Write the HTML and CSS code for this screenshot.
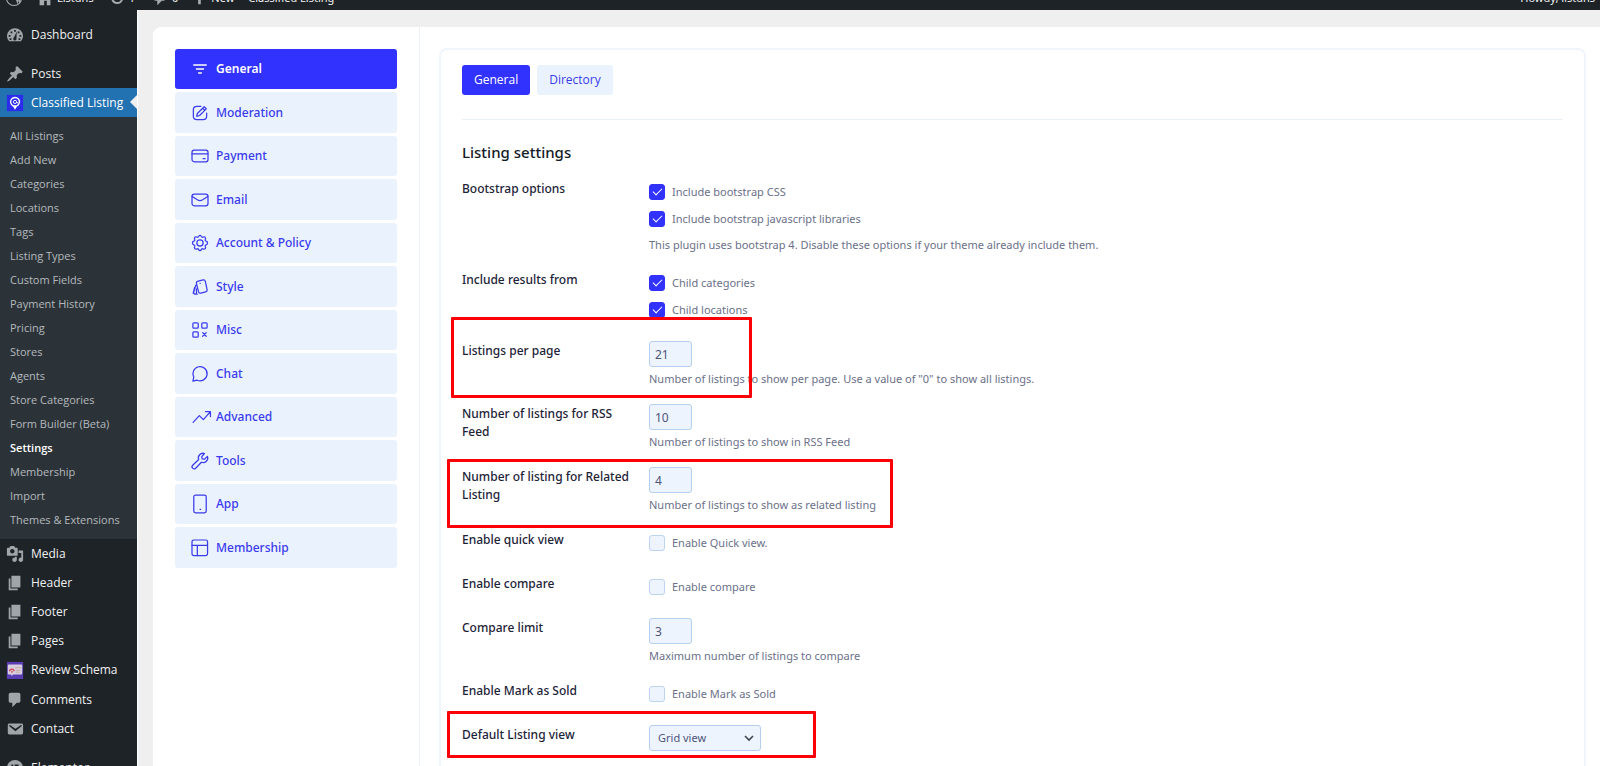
FILE: index.html
```html
<!DOCTYPE html>
<html lang="en">
<head>
<meta charset="utf-8">
<title>Classified Listing Settings</title>
<link rel="stylesheet" href="styles.css">
</head>
<body>
<svg class="defs" aria-hidden="true">
  <symbol id="pages" viewBox="0 0 20 20"><path d="M6 15V2h10v13H6zm-1 1h8v2H3V5h2v11z"/></symbol>
</svg>
<div class="page">
  <header class="bar">
    <div class="bar-inner">
      <svg class="bar-icon" viewBox="0 0 20 20"><path fill-rule="evenodd" d="M10 1a9 9 0 1 0 0 18 9 9 0 0 0 0-18zm0 1.200a7.800 7.800 0 1 1 0 15.600 7.800 7.800 0 0 1 0-15.600z"/><path d="M3 7l4 10.500L9.200 11 7.500 6.500H13l3 9.500c1.500-2 1.800-6 .8-8.800L14 17l-3.500-9.500L7 17.500z"/></svg>
      <a href="#" class="bar-site"><svg class="bar-icon" viewBox="0 0 20 20"><path d="M16 8.500l1.500 1.500-1 1L10 4.500 3.500 11l-1-1L10 2.500zM10 6l6 6v6h-4v-5H9v5H4v-6z"/></svg>Listdns</a>
      <a href="#" class="bar-updates"><svg class="bar-icon" viewBox="0 0 20 20"><path d="M10.200 3.300c3.800 0 6.800 3 6.800 6.700s-3 6.700-6.800 6.700a6.700 6.700 0 0 1-6.400-4.700h2.300a4.600 4.600 0 1 0-.4-3H8l-3.500 3.800L1 9h2.500a6.800 6.800 0 0 1 6.700-5.700z"/></svg>1</a>
      <a href="#" class="bar-comments"><svg class="bar-icon" viewBox="0 0 20 20"><path d="M5 2h9c1.100 0 2 .9 2 2v7c0 1.100-.9 2-2 2h-2l-5 5v-5H5c-1.100 0-2-.9-2-2V4c0-1.100.9-2 2-2z"/></svg>0</a>
      <a href="#" class="bar-new"><svg class="bar-icon" viewBox="0 0 20 20"><path d="M9 5h3v4h4v3h-4v5H9v-5H5V9h4z"/></svg>New</a>
      <a href="#">Classified Listing</a>
      <a href="#" class="bar-user">Howdy, listdns</a>
    </div>
  </header>
  <div class="body">
    <nav class="side" aria-label="Admin menu">
      <a href="#" class="item"><svg viewBox="0 0 20 20"><path fill-rule="evenodd" d="M3.500 17A9 9 0 0 1 1 11.500a9 9 0 0 1 18 0A9 9 0 0 1 16.500 17zM9 4.500v2h2v-2zM5 6v2h2V6zm8 0v2h2V6zM3 10v2h2v-2zm12 0v2h2v-2zm-3-4L9 12.500a1.900 1.900 0 1 0 2.600.9zM4 13.500v2h2v-2zm10 0v2h2v-2z"/></svg>Dashboard</a>
      <a href="#" class="item spaced"><svg viewBox="0 0 20 20"><path d="M10.440 3.020l1.820-1.820 6.360 6.350-1.830 1.820c-1.050-.68-2.480-.57-3.410.36l-.75.75c-.92.93-1.040 2.350-.35 3.410l-1.830 1.820-2.410-2.410-2.800 2.790c-.42.42-3.380 2.710-3.800 2.290s1.860-3.390 2.280-3.810l2.790-2.790L4.100 9.360l1.830-1.820c1.050.69 2.480.57 3.400-.36l.75-.75c.93-.92 1.050-2.350.36-3.410z"/></svg>Posts</a>
      <a href="#" class="item current"><svg viewBox="0 0 20 20"><rect x="1" y="1" width="18" height="18" fill="#2c2cec"/><path fill="none" stroke="#fff" stroke-width="1.500" d="M8 13.200a4.900 4.900 0 1 1 4.300-.1"/><path fill="none" stroke="#fff" d="M11.800 8.800a1.800 1.800 0 1 1-3.600 0 1.800 1.800 0 0 1 3.600 0c0 1.800 1.600 1.400 1.600.2"/><path fill="#fff" d="M7 12.500h6L10 17.500z"/></svg>Classified Listing</a>
      <div class="sub">
        <a href="#">All Listings</a><a href="#">Add New</a><a href="#">Categories</a><a href="#">Locations</a><a href="#">Tags</a><a href="#">Listing Types</a><a href="#">Custom Fields</a><a href="#">Payment History</a><a href="#">Pricing</a><a href="#">Stores</a><a href="#">Agents</a><a href="#">Store Categories</a><a href="#">Form Builder (Beta)</a><a href="#" class="on">Settings</a><a href="#">Membership</a><a href="#">Import</a><a href="#">Themes &amp; Extensions</a>
      </div>
      <a href="#" class="item"><svg viewBox="0 0 20 20"><path d="M13 11V4c0-.55-.45-1-1-1h-1.670L9 1H5L3.670 3H2c-.55 0-1 .45-1 1v7c0 .55.45 1 1 1h10c.55 0 1-.45 1-1zM7 4.500c1.380 0 2.500 1.120 2.500 2.500S8.380 9.500 7 9.500 4.500 8.380 4.500 7 5.620 4.500 7 4.500zM14 6h5v10.500c0 1.380-1.120 2.500-2.500 2.500S14 17.880 14 16.500s1.120-2.500 2.500-2.500c.17 0 .34.02.5.05V9h-3V6zm-4 8.050V13h2v3.500c0 1.380-1.120 2.500-2.500 2.500S7 17.880 7 16.500 8.120 14 9.500 14c.17 0 .34.02.5.05z"/></svg>Media</a>
      <a href="#" class="item"><svg><use href="#pages"/></svg>Header</a>
      <a href="#" class="item"><svg><use href="#pages"/></svg>Footer</a>
      <a href="#" class="item"><svg><use href="#pages"/></svg>Pages</a>
      <a href="#" class="item tall-item"><svg viewBox="0 0 20 20"><rect x="1" y="1" width="18" height="19" fill="#5a3cb4"/><path fill="#d8cfdf" d="M3 4h14q1 0 1 1v9q0 1-1 1H8l-2 2v-2H3q-1 0-1-1V5q0-1 1-1z"/><path fill="none" stroke="#d24a5a" stroke-width="1.500" d="M4 11.500a2.500 2.500 0 1 1 5 0"/><path fill="#cf6b76" d="M5.500 11h2v2h-2z"/><path stroke="#c9a89c" d="M10 7.500h7M11 10.500h5M11 12.500h4"/></svg>Review Schema</a>
      <a href="#" class="item"><svg viewBox="0 0 20 20"><path d="M5 2h9c1.100 0 2 .9 2 2v7c0 1.100-.9 2-2 2h-2l-5 5v-5H5c-1.100 0-2-.9-2-2V4c0-1.100.9-2 2-2z"/></svg>Comments</a>
      <a href="#" class="item"><svg viewBox="0 0 20 20"><path d="M3.870 4h13.250C18.370 4 19 4.590 19 5.790v8.420c0 1.190-.63 1.790-1.880 1.790H3.870c-1.250 0-1.880-.6-1.880-1.790V5.790c0-1.200.63-1.790 1.880-1.790zm6.620 8.600l6.740-5.530c.24-.2.430-.66.130-1.070-.29-.41-.82-.42-1.170-.17l-5.700 3.860L4.800 5.830c-.35-.25-.88-.24-1.170.17-.3.410-.11.870.13 1.070z"/></svg>Contact</a>
      <a href="#" class="item spaced"><svg viewBox="0 0 20 20"><path fill-rule="evenodd" d="M10 1a9 9 0 1 0 0 18 9 9 0 0 0 0-18zM6 6h2v8H6zm3.500 0H14v1.700H9.500zm0 3.200H14v1.700H9.500zm0 3.100H14V14H9.500z"/></svg>Elementor</a>
    </nav>
    <main class="content">
      <div class="card">
        <nav class="tabs-side" aria-label="Settings sections">
          <a href="#" class="sec on"><svg viewBox="0 0 18 18"><path d="M2 4.500h14M5 9h8M7.500 13.500h3" stroke-width="1.600"/></svg>General</a>
          <a href="#" class="sec"><svg viewBox="0 0 18 18"><path d="M10 1.500H5.500q-4 0-4 4v7q0 4 4 4h7q4 0 4-4V9M13.700 2l2.400 2.300-7.600 7.500-3.200.9.700-3.200zM12 3.800l2.300 2.300"/></svg>Moderation</a>
          <a href="#" class="sec"><svg viewBox="0 0 18 18"><rect x="0" y="2.500" width="18" height="13" rx="2.500"/><path d="M0 6.500h18M12.500 12h2.200"/></svg>Payment</a>
          <a href="#" class="sec"><svg viewBox="0 0 18 18"><rect x="0" y="2.500" width="18" height="13" rx="2.500"/><path d="M.3 5l5.700 3.800q3 1.800 6 0l5.700-3.800"/></svg>Email</a>
          <a href="#" class="sec"><svg viewBox="0 0 18 18"><circle cx="9" cy="9" r="3.500"/><path d="M9 .5q1.200 0 1.500 1.200.8 1.300 2.200.6 1.600-.7 2.300.6.800 1-.1 2.100-.5 1.400 1 1.900 1.600.4 1.600 2.100t-1.600 2.100q-1.500.5-1 1.900.9 1.100.1 2.100-.7 1.300-2.300.6-1.400-.7-2.200.6-.3 1.200-1.500 1.200t-1.500-1.200q-.8-1.300-2.200-.6-1.600.7-2.300-.6-.8-1 .1-2.100.5-1.400-1-1.900Q.5 10.700.5 9t1.600-2.100q1.500-.5 1-1.900-.9-1.100-.1-2.100.7-1.300 2.300-.6 1.400.7 2.200-.6Q7.800.5 9 .5z"/></svg>Account &amp; Policy</a>
          <a href="#" class="sec"><svg viewBox="0 0 18 18"><path d="M7 2.400l5.500-1.300q2-.4 2.500 1.500l2 9.300q.4 2-1.600 2.500l-5.500 1.500q-2 .4-2.500-1.500L5 5q-.4-2 2-2.600zM4.300 7L2 14.500q-.6 2 1.500 2.500H6M3 9.500L1.300 16M9 4.800h.3M5 11v5"/></svg>Style</a>
          <a href="#" class="sec"><svg viewBox="0 0 18 18"><rect x="1" y="1" width="6" height="6" rx="1"/><rect x="11" y="1" width="6" height="6" rx="1"/><rect x="1" y="11" width="6" height="6" rx="1"/><path d="M12 12l4 4m0-4l-4 4"/></svg>Misc</a>
          <a href="#" class="sec"><svg viewBox="0 0 18 18"><path d="M1 17l1-4.500A8 8 0 1 1 5.800 16z"/></svg>Chat</a>
          <a href="#" class="sec"><svg class="wide" viewBox="0 0 22 18"><path d="M1 15l7-7.500 4.500 4.500L20.500 3M15 3h5.500v5.500"/></svg>Advanced</a>
          <a href="#" class="sec"><svg viewBox="0 0 18 18"><path d="M14 .6a5.200 5.200 0 0 0-6.500 6.800L.8 13.700a2.200 2.200 0 0 0 3.300 3.400L10.600 10.400a5.200 5.200 0 0 0 6.800-6.600L14 7 11.400 6.500 11 4z"/></svg>Tools</a>
          <a href="#" class="sec"><svg class="tall" viewBox="0 0 18 22"><rect x="2" y="1" width="14" height="20" rx="2"/><path d="M9 17h.8"/></svg>App</a>
          <a href="#" class="sec"><svg viewBox="0 0 18 18"><rect x="0" y="0" width="17.500" height="17.500" rx="2"/><path d="M0 6h17.500M6 6v11.500"/></svg>Membership</a>
        </nav>
        <section class="area">
          <form class="panel">
            <div class="tabs">
              <button type="button" class="tab on">General</button>
              <button type="button" class="tab">Directory</button>
            </div>
            <h2>Listing settings</h2>
            <div class="row"><div class="label">Bootstrap options</div>
              <div class="field">
                <label class="check"><input type="checkbox" checked>Include bootstrap CSS</label>
                <label class="check"><input type="checkbox" checked>Include bootstrap javascript libraries</label>
                <p>This plugin uses bootstrap 4. Disable these options if your theme already include them.</p>
              </div></div>
            <div class="row"><div class="label">Include results from</div>
              <div class="field checks">
                <label class="check"><input type="checkbox" checked>Child categories</label>
                <label class="check"><input type="checkbox" checked>Child locations</label>
              </div></div>
            <div class="row"><label class="label" for="per-page">Listings per page</label>
              <div class="field"><input class="num" id="per-page" type="text" value="21"><p>Number of listings to show per page. Use a value of "0" to show all listings.</p></div></div>
            <div class="row"><label class="label" for="rss">Number of listings for RSS Feed</label>
              <div class="field"><input class="num" id="rss" type="text" value="10"><p>Number of listings to show in RSS Feed</p></div></div>
            <div class="row"><label class="label" for="related">Number of listing for Related Listing</label>
              <div class="field"><input class="num" id="related" type="text" value="4"><p>Number of listings to show as related listing</p></div></div>
            <div class="row"><div class="label">Enable quick view</div>
              <div class="field checks"><label class="check"><input type="checkbox">Enable Quick view.</label></div></div>
            <div class="row"><div class="label">Enable compare</div>
              <div class="field checks"><label class="check"><input type="checkbox">Enable compare</label></div></div>
            <div class="row"><label class="label" for="limit">Compare limit</label>
              <div class="field"><input class="num" id="limit" type="text" value="3"><p>Maximum number of listings to compare</p></div></div>
            <div class="row"><div class="label">Enable Mark as Sold</div>
              <div class="field checks"><label class="check"><input type="checkbox">Enable Mark as Sold</label></div></div>
            <div class="row"><label class="label" for="view">Default Listing view</label>
              <div class="field"><span class="select"><select id="view"><option>Grid view</option></select><svg viewBox="0 0 12 8"><path d="M2 2l4 4 4-4"/></svg></span></div></div>
            <div class="mark mark-page"></div>
            <div class="mark mark-related"></div>
            <div class="mark mark-view"></div>
          </form>
        </section>
      </div>
    </main>
  </div>
</div>
</body>
</html>
```
FILE: styles.css
```css
* { box-sizing: border-box; }
body { margin: 0; font: 12px/18px "Noto Sans", "Open Sans", sans-serif; color: #6b7089; }
a { text-decoration: none; color: inherit; }
p, h2 { margin: 0; }
.defs { position: absolute; width: 0; height: 0; }

.page { height: 100vh; overflow: hidden; display: flex; flex-direction: column; background: #efefef; }
.bar { height: 10px; flex: none; overflow: hidden; background: #1d2327; color: #f0f0f1; display: flex; align-items: flex-end; font-size: 11px; }
.bar-inner { flex: 1; height: 25px; padding: 0 5px; display: flex; align-items: center; }
.bar-inner a { display: flex; align-items: center; gap: 3px; }
.bar-icon { width: 18px; height: 18px; fill: #a7aaad; }
.bar-site { margin-left: 13px; }
.bar-updates { margin-left: 14px; }
.bar-comments { margin-left: 16px; }
.bar-new { margin: 0 14px 0 12px; }
.bar-inner .bar-user { margin-left: auto; }

.body { flex: 1; min-height: 0; display: flex; }
.side { flex: none; width: 137px; padding-top: 10px; background: #1d2327; color: #f0f0f1; overflow: hidden; font-family: "Open Sans", sans-serif; }
.item { display: flex; align-items: center; gap: 7px; height: 29px; padding-left: 6px; white-space: nowrap; position: relative; }
.item svg { width: 18px; height: 18px; fill: #a0a5aa; flex: none; }
.tall-item { height: 30px; }
.spaced { margin-top: 10px; }
.current { background: #2271b1; color: #fff; }
.current::after { content: ""; position: absolute; right: 0; top: 7px; border: 7px solid transparent; border-left: 0; border-right-color: #efefef; }
.sub { display: flex; flex-direction: column; padding: 7px 0; background: #2c3338; color: #b4b9be; font-size: 11px; }
.sub a { padding-left: 10px; line-height: 24px; white-space: nowrap; }
.sub .on { color: #fff; font-weight: 600; }

.content { flex: 1; min-width: 0; padding: 17px 0 0 15px; border-left: 1px solid #fff; }
.card { height: 100%; display: flex; background: #fff; border-radius: 8px 0 0 0; }
.tabs-side { flex: none; width: 267px; padding: 22px 22px 0; border-right: 1px solid #ebf0f7; display: flex; flex-direction: column; }
.sec { display: flex; align-items: center; gap: 8px; height: 40px; margin-bottom: 3px; padding-left: 17px; border-radius: 3px; background: #eaf3fd; color: #3a3aee; font-weight: 500; }
.sec:nth-child(even) { height: 41px; }
.sec.on { background: #3232ff; color: #fff; font-weight: 600; }
.sec svg { width: 16px; height: 16px; fill: none; stroke: currentColor; stroke-width: 1.4; stroke-linecap: round; stroke-linejoin: round; overflow: visible; }
.sec .wide { width: 20px; margin-right: -4px; }
.sec .tall { height: 20px; }

.area { flex: 1; min-width: 0; padding: 21px 14px 0 19px; }
.panel { position: relative; height: 100%; padding: 15px 21px 0; border: 2px solid #f0f5fb; border-bottom: 0; border-radius: 8px 8px 0 0; }
.tabs { display: flex; gap: 7px; padding-bottom: 24px; border-bottom: 1px solid #eaf1fa; }
.tab { height: 30px; padding: 0 12px; border: 0; border-radius: 3px; background: #eaf3fd; color: #3a3aee; font: inherit; font-family: "Open Sans", sans-serif; }
.tab.on { background: #3232ff; color: #fff; }
h2 { margin: 22px 0 16px; font-size: 15px; line-height: 21px; font-weight: 500; color: #141a26; }
.row { display: grid; grid-template-columns: 187px 1fr; margin-bottom: 16px; }
.label { max-width: 177px; padding-top: 1px; color: #1d2337; font-weight: 500; }
.field { display: flex; flex-direction: column; align-items: flex-start; font-size: 11px; }
.field p { margin-top: 3px; }
.field .check + p { margin-top: 4px; }
.checks { padding-bottom: 2px; }
.check { display: flex; align-items: center; gap: 7px; height: 26px; }
.check + .check { margin-top: 1px; }
.check input { appearance: none; width: 16px; height: 16px; margin: 0; border: 1px solid #bcd4f0; border-radius: 3px; background: #edf4fe; display: grid; place-items: center; }
.check input:checked { background: #3232ff; border-color: #3232ff; }
.check input:checked::before { content: ""; width: 8px; height: 4px; margin-bottom: 3px; border: solid #fff; border-width: 0 0 1px 1px; transform: rotate(-45deg); }
.num { width: 43px; height: 26px; padding: 0 5px; border: 1px solid #b5cfee; border-radius: 3px; background: #edf4fe; color: #50557a; font: inherit; font-size: 12px; }
.select { position: relative; }
.select select { appearance: none; width: 112px; height: 26px; padding: 0 8px; border: 1px solid #b5cfee; border-radius: 3px; background: #edf4fe; color: #50557a; font: inherit; }
.select svg { position: absolute; right: 6px; top: 9px; width: 12px; height: 8px; fill: none; stroke: #40454f; stroke-width: 1.6; }

.mark { position: absolute; border: 3px solid #fb0006; border-radius: 1px; pointer-events: none; }
.mark-page { left: 10px; top: 267px; width: 301px; height: 81px; }
.mark-related { left: 6px; top: 409px; width: 446px; height: 69px; }
.mark-view { left: 6px; top: 661px; width: 369px; height: 47px; }
```
